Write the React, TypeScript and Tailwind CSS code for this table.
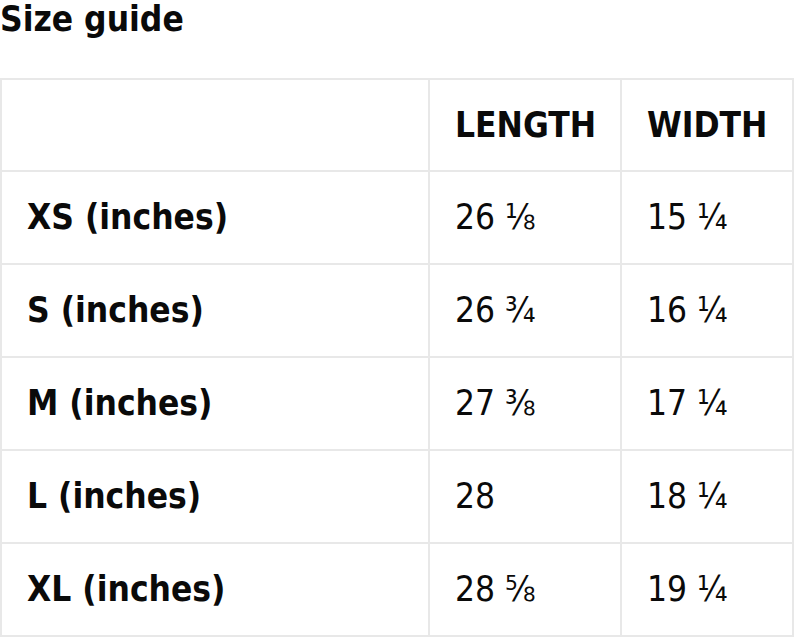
export default function App() {
  const rows = [
    ["XS (inches)", "26 ⅛", "15 ¼"],
    ["S (inches)", "26 ¾", "16 ¼"],
    ["M (inches)", "27 ⅜", "17 ¼"],
    ["L (inches)", "28", "18 ¼"],
    ["XL (inches)", "28 ⅝", "19 ¼"],
  ];
  const font = { fontFamily: '"DejaVu Sans Condensed", "DejaVu Sans", sans-serif' };
  return (
    <div className="w-[794px] h-[638px] bg-white text-[#0a0a0a]" style={font}>
      <div className="h-[78px] text-[35px] font-bold leading-[38px]">Size guide</div>
      <table className="border-collapse table-fixed w-[792px]">
        <colgroup>
          <col className="w-[428px]" />
          <col className="w-[192px]" />
          <col className="w-[172px]" />
        </colgroup>
        <tbody>
          <tr className="h-[92px]">
            <td className="border-2 border-[#e8e8e8]"></td>
            <td className="border-2 border-[#e8e8e8] pl-[25px] text-[35px] font-bold">LENGTH</td>
            <td className="border-2 border-[#e8e8e8] pl-[25px] text-[35px] font-bold">WIDTH</td>
          </tr>
          {rows.map((r) => (
            <tr key={r[0]} className="h-[93px]">
              <td className="border-2 border-[#e8e8e8] pl-[25px] text-[35px] font-bold">{r[0]}</td>
              <td className="border-2 border-[#e8e8e8] pl-[25px] text-[35px]">{r[1]}</td>
              <td className="border-2 border-[#e8e8e8] pl-[25px] text-[35px]">{r[2]}</td>
            </tr>
          ))}
        </tbody>
      </table>
    </div>
  );
}
